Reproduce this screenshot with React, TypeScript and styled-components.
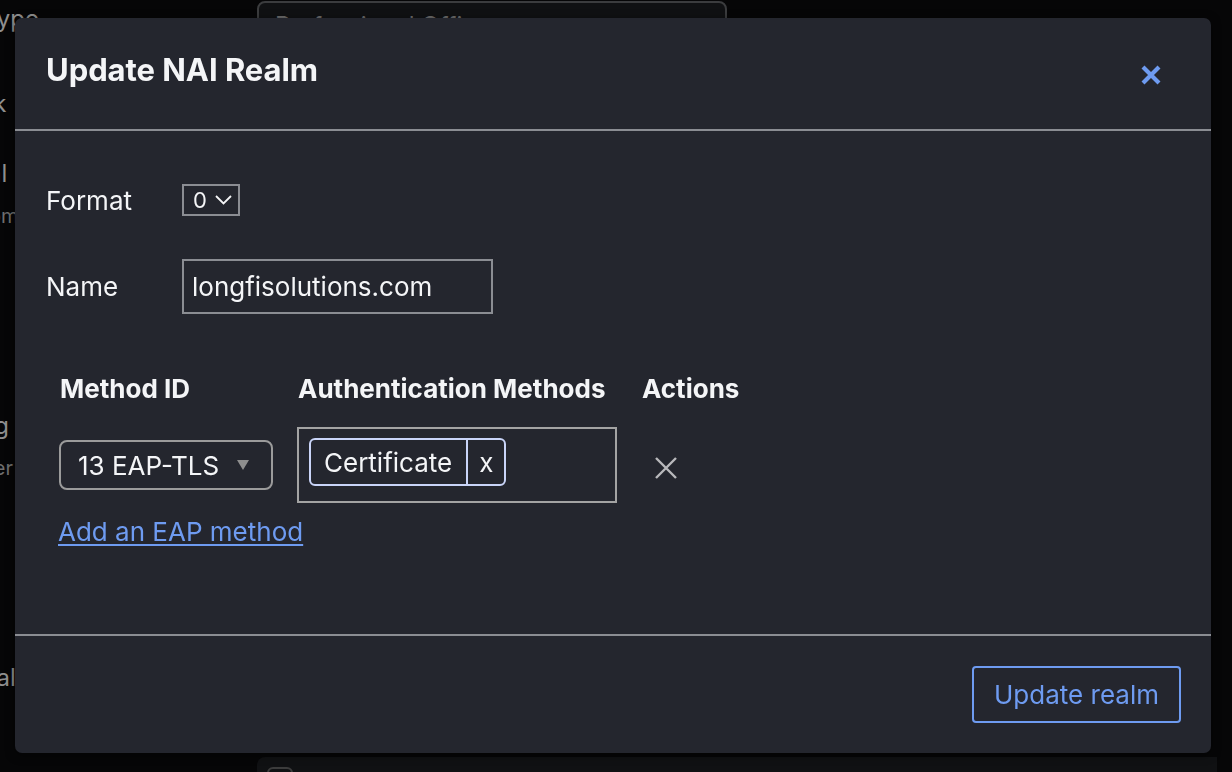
import React from "react";
import styled, { createGlobalStyle } from "styled-components";

const color = {
  page: "#060607",
  modal: "#24262e",
  line: "#8b8d93",
  text: "#f4f5f7",
  muted: "#9a9a9a",
  blue: "#6e9bf1",
  chip: "#c9d4f8",
};

const font = `Inter, "Noto Sans", "Liberation Sans", sans-serif`;

const GlobalStyle = createGlobalStyle`
  html, body {
    margin: 0;
    padding: 0;
    height: 100%;
    background: ${color.page};
    font-family: ${font};
    overflow: hidden;
  }
`;

/* ---------- page behind the dialog ---------- */

const Page = styled.div`
  width: 1232px;
  height: 772px;
  display: flex;
  gap: 40px;
  box-sizing: border-box;
  overflow: hidden;
  background: ${color.page};
`;

const LabelColumn = styled.div`
  margin-left: -90px;
  width: 307px;
  flex-shrink: 0;
  display: flex;
  flex-direction: column;
  color: #8f8f8f;
  font-size: 24px;
  line-height: 30px;
  white-space: nowrap;
`;

const BgLabel = styled.div<{ $top: number }>`
  margin-top: ${({ $top }) => $top}px;
`;

const BgHint = styled.div`
  font-size: 20px;
  color: #6e6e6e;
  margin-top: 12px;
`;

const FieldColumn = styled.div`
  display: flex;
  flex-direction: column;
  justify-content: space-between;
  padding-top: 1px;
`;

const BgInput = styled.div`
  width: 470px;
  height: 46px;
  box-sizing: border-box;
  border: 2px solid #3b3c3e;
  border-radius: 8px;
  background: #101113;
  color: #6c6c6c;
  font-size: 24px;
  padding: 8px 16px;
  white-space: nowrap;
  overflow: hidden;
`;

const BgPanel = styled.div`
  width: 960px;
  height: 40px;
  margin-bottom: -25px;
  border-radius: 8px 0 0 0;
  background: #101113;
  padding: 10px 10px;
  box-sizing: border-box;
`;

const BgCheck = styled.div`
  width: 26px;
  height: 26px;
  border: 2px solid #3c3c3c;
  border-radius: 6px;
  box-sizing: border-box;
`;

/* ---------- dialog ---------- */

const Overlay = styled.div`
  position: fixed;
  inset: 0;
`;

const Modal = styled.div`
  position: absolute;
  top: 18px;
  left: 15px;
  width: 1196px;
  height: 735px;
  background: ${color.modal};
  border-radius: 7px;
  display: flex;
  flex-direction: column;
  color: ${color.text};
  box-shadow: 0 2px 10px rgba(0, 0, 0, 0.5);
`;

const Header = styled.div`
  height: 111px;
  flex-shrink: 0;
  display: flex;
  align-items: center;
  justify-content: space-between;
  padding: 0 49px 0 31px;
  border-bottom: 2px solid ${color.line};
`;

const Title = styled.h1`
  margin: 0 0 8px;
  font-size: 31px;
  font-weight: 700;
  letter-spacing: -0.05px;
`;

const CloseButton = styled.button`
  border: none;
  background: none;
  padding: 0;
  margin-top: 2px;
  display: flex;
  cursor: pointer;
`;

const Body = styled.div`
  flex: 1;
  padding: 53px 31px 0;
  display: flex;
  flex-direction: column;
`;

const FormRow = styled.div<{ $gap?: number }>`
  display: flex;
  align-items: center;
  margin-bottom: ${({ $gap }) => $gap ?? 43}px;
`;

const Label = styled.label`
  width: 136px;
  font-size: 26px;
`;

const NativeSelect = styled.div`
  height: 32px;
  box-sizing: border-box;
  border: 2px solid ${color.line};
  display: flex;
  align-items: center;
  gap: 8px;
  padding: 0 6px 0 9px;
  font-size: 22px;
`;

const TextInput = styled.input`
  width: 311px;
  height: 55px;
  box-sizing: border-box;
  border: 2px solid ${color.line};
  background: transparent;
  color: ${color.text};
  font-family: ${font};
  font-size: 26px;
  padding: 0 8px;
  outline: none;
`;

const Table = styled.div`
  margin-left: 14px;
  display: grid;
  grid-template-columns: 238px 344px auto;
  align-items: center;
`;

const HeadCell = styled.div`
  font-size: 26px;
  font-weight: 700;
  height: 36px;
  margin-bottom: 21px;
  display: flex;
  align-items: center;
`;

const MethodSelect = styled.div`
  width: 214px;
  height: 50px;
  margin-left: -1px;
  box-sizing: border-box;
  border: 2px solid #9b9b9b;
  border-radius: 8px;
  display: flex;
  align-items: center;
  justify-content: space-between;
  padding: 0 22px 0 17px;
  font-size: 26px;
`;

const Caret = styled.span`
  width: 0;
  height: 0;
  border-left: 6px solid transparent;
  border-right: 6px solid transparent;
  border-top: 10px solid #8e8e8e;
`;

const TagBox = styled.div`
  width: 320px;
  height: 76px;
  margin-left: -1px;
  box-sizing: border-box;
  border: 2px solid #a3a3a3;
  padding: 9px 10px;
  display: flex;
  align-items: flex-start;
`;

const Chip = styled.div`
  height: 48px;
  box-sizing: border-box;
  border: 2px solid ${color.chip};
  border-radius: 6px;
  display: flex;
  align-items: stretch;
  font-size: 26px;
`;

const ChipText = styled.span`
  display: flex;
  align-items: center;
  padding: 0 14px 0 13px;
  border-right: 2px solid ${color.chip};
`;

const ChipRemove = styled.span`
  display: flex;
  align-items: center;
  padding: 0 11px;
`;

const ActionButton = styled.button`
  border: none;
  background: none;
  padding: 0;
  margin: 6px 0 0 12px;
  display: flex;
  width: 24px;
  cursor: pointer;
`;

const AddLink = styled.a`
  margin: 13px 0 0 12px;
  align-self: flex-start;
  font-size: 26px;
  color: ${color.blue};
  text-decoration: underline;
  text-underline-offset: 3px;
  cursor: pointer;
`;

const Footer = styled.div`
  height: 119px;
  flex-shrink: 0;
  border-top: 2px solid ${color.line};
  display: flex;
  justify-content: flex-end;
  align-items: flex-start;
  padding: 30px 30px 0;
  box-sizing: border-box;
`;

const PrimaryButton = styled.button`
  width: 209px;
  height: 57px;
  border: 2px solid ${color.blue};
  border-radius: 4px;
  background: transparent;
  color: ${color.blue};
  font-family: ${font};
  font-size: 26px;
  cursor: pointer;
`;

const CloseIcon = () => (
  <svg width="22" height="22" viewBox="0 0 22 22">
    <path d="M3 3 L19 19 M19 3 L3 19" stroke={color.blue} strokeWidth="4.2" strokeLinecap="butt" />
  </svg>
);

const ThinX = () => (
  <svg width="24" height="24" viewBox="0 0 24 24">
    <path d="M2 2 L22 22 M22 2 L2 22" stroke="#b9b9bc" strokeWidth="2.4" />
  </svg>
);

const Chevron = () => (
  <svg width="17" height="10" viewBox="0 0 17 10">
    <path d="M1 1 L8.5 8.5 L16 1" stroke={color.text} strokeWidth="1.8" fill="none" />
  </svg>
);

const App: React.FC = () => (
  <>
    <GlobalStyle />
    <Page>
      <LabelColumn>
        <BgLabel $top={4}>Venue type</BgLabel>
        <BgLabel $top={55}>Network</BgLabel>
        <BgLabel $top={40}>Terminal</BgLabel>
        <BgHint>Emails domain</BgHint>
        <BgLabel $top={180}>Roaming</BgLabel>
        <BgHint>Subscriber</BgHint>
        <BgLabel $top={180}>Universal</BgLabel>
      </LabelColumn>
      <FieldColumn>
        <BgInput>Professional Office</BgInput>
        <BgPanel>
          <BgCheck />
        </BgPanel>
      </FieldColumn>
    </Page>

    <Overlay>
      <Modal role="dialog" aria-labelledby="nai-title">
        <Header>
          <Title id="nai-title">Update NAI Realm</Title>
          <CloseButton aria-label="Close">
            <CloseIcon />
          </CloseButton>
        </Header>

        <Body>
          <FormRow>
            <Label>Format</Label>
            <NativeSelect>
              0 <Chevron />
            </NativeSelect>
          </FormRow>
          <FormRow $gap={56}>
            <Label>Name</Label>
            <TextInput defaultValue="longfisolutions.com" />
          </FormRow>

          <Table>
            <HeadCell>Method ID</HeadCell>
            <HeadCell>Authentication Methods</HeadCell>
            <HeadCell>Actions</HeadCell>

            <MethodSelect>
              13 EAP-TLS <Caret />
            </MethodSelect>
            <TagBox>
              <Chip>
                <ChipText>Certificate</ChipText>
                <ChipRemove>x</ChipRemove>
              </Chip>
            </TagBox>
            <ActionButton aria-label="Remove method">
              <ThinX />
            </ActionButton>
          </Table>
          <AddLink>Add an EAP method</AddLink>
        </Body>

        <Footer>
          <PrimaryButton>Update realm</PrimaryButton>
        </Footer>
      </Modal>
    </Overlay>
  </>
);

export default App;
